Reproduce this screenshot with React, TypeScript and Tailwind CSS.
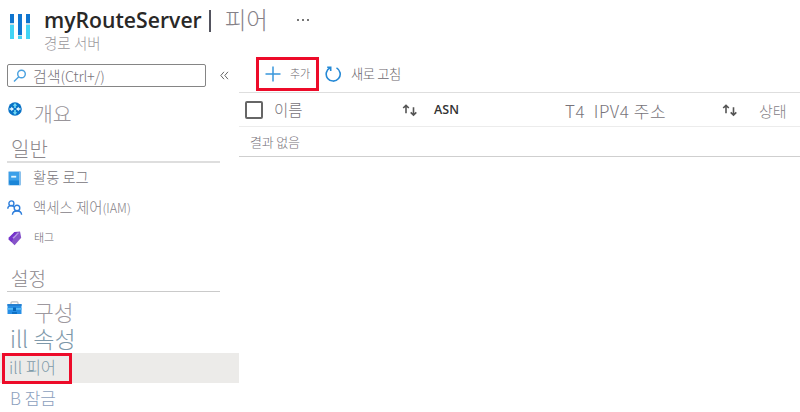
import React from "react";

const KR = "font-['Noto_Sans_CJK_KR',sans-serif] font-light leading-none whitespace-pre";

function Label({ children, className }: { children: React.ReactNode; className: string }) {
  return <span className={`${KR} ${className}`}>{children}</span>;
}

function RouteServerLogo() {
  return (
    <svg width="22" height="26" viewBox="0 0 22 26" className="shrink-0">
      <path d="M1 0h4v9H1zM9 0h4v21H9zM17 0h4v9h-4z" fill="#0f75cf" />
      <path d="M1 9h4v2H1zM17 9h4v2h-4zM9 21h4v1H9z" fill="#c5dde6" />
      <path d="M1 11h4v14H1zM17 11h4v14h-4zM9 22h4v3H9z" fill="#43d4f4" />
    </svg>
  );
}

function SearchIcon() {
  return (
    <svg width="14" height="14" viewBox="0 0 14 14" fill="none" stroke="#48a0df" strokeWidth="1.4" className="shrink-0">
      <circle cx="8.5" cy="5" r="3.8" />
      <path d="M5.8 7.7 1 12.5" />
    </svg>
  );
}

function OverviewIcon() {
  return (
    <svg width="14" height="14" viewBox="0 0 14 14">
      <circle cx="7" cy="7" r="6.8" fill="#0873c7" />
      <path d="M7 1 9.2 3.8H7.8V6H6.2V3.8H4.8zM7 13l2.2-2.8H7.8V8H6.2v2.2H4.8z" fill="#75dcf5" />
      <path d="M1.5 6.2h1.7V4.8L6 7 3.2 9.2V7.8H1.5zM12.5 6.2h-1.7V4.8L8 7l2.8 2.2V7.8h1.7z" fill="#e7f8fd" />
    </svg>
  );
}

function LogIcon() {
  return (
    <svg width="14" height="15" viewBox="0 0 14 15">
      <rect x="0.2" y="0.2" width="12.8" height="14.3" rx="1" fill="#8bc1ec" />
      <path d="M1 1H11v11.7H1z" fill="#3b9fe9" />
      <path d="M1 9.5h10V14H1.5z" fill="#1b86d8" />
      <rect x="3.2" y="4.8" width="5" height="1.8" fill="#e3f6ff" />
    </svg>
  );
}

function PeopleIcon() {
  return (
    <svg width="16" height="16" viewBox="0 0 16 16" fill="none" stroke="#2f7fdc" strokeWidth="1.4">
      <circle cx="4.4" cy="3.4" r="2.5" />
      <path d="M.8 8.8C.8 4.9 5.6 4.9 7 7" />
      <circle cx="10" cy="8" r="2.8" />
      <path d="M5.4 14.8C5.7 9.7 14.3 9.7 14.6 14.8" />
    </svg>
  );
}

function TagIcon() {
  return (
    <svg width="14" height="15" viewBox="0 0 14 15">
      <path d="M6.5 1 12 .5l1.2 6.3L6.6 14.2.5 8.2z" fill="#8653c9" />
      <path d="M6.5 1 .8 6.6l-.3 1.6L3.6 11 9 1z" fill="#7432cb" />
      <path d="m4.4 6.8 5.4-5.1 1.4.1-5.5 6z" fill="#b79ae4" />
    </svg>
  );
}

function ToolboxIcon() {
  return (
    <svg width="15" height="14" viewBox="0 0 15 14">
      <path d="M4 3.5V1.9c0-.7.4-1 1-1h5c.6 0 1 .3 1 1v1.6" fill="none" stroke="#b9bec2" strokeWidth="1.2" />
      <path d="M.5 3h14v10H.5z" fill="#278fe6" />
      <path d="M.5 3h14v2H.5z" fill="#2480d0" />
      <path d="M.5 7h14v1.8H.5z" fill="#53b9f5" />
      <path d="M6 6.5h3V10H6zM5 11.2h5v1.5H5z" fill="#0968b9" />
    </svg>
  );
}

function SortIcon() {
  return (
    <svg width="16" height="13" viewBox="0 0 16 13" fill="none" stroke="#555" strokeWidth="1.6" className="mt-[2px] shrink-0">
      <path d="M4 9.2V1.5M1.2 4 4 1.3 6.8 4M11.5 3.3v7.8M8.7 8.4l2.8 2.7 2.8-2.7" />
    </svg>
  );
}

function Sidebar() {
  return (
    <aside className="flex w-[239px] shrink-0 flex-col">
      <div className="flex h-[39px] items-start pl-[7px] pt-[7px]">
        <div className="flex h-[23px] w-[199px] items-center rounded-[2px] border border-[#858585] pl-[5px]">
          <SearchIcon />
          <Label className="ml-[6px] text-[15px] text-[#77737a]">
            검색<span className="text-[14.5px] tracking-[-0.2px]">(Ctrl+/)</span>
          </Label>
        </div>
        <svg width="9" height="9" viewBox="0 0 9 9" fill="none" stroke="#666" className="ml-[14px] mt-[7px]">
          <path d="M4 .8.8 4.5 4 8.2M8 .8 4.8 4.5 8 8.2" />
        </svg>
      </div>
      <div className="flex h-[33px] items-start pl-2 pt-[6px]">
        <OverviewIcon />
        <Label className="ml-[12px] mt-px text-[20.5px] text-[#99959a]">개요</Label>
      </div>
      <div className="ml-[7px] h-[34px] w-[213px] border-b-2 border-[#dedede] pl-1 pt-[10px]">
        <Label className="block text-[20px] text-[#8b878c]">일반</Label>
      </div>
      <div className="flex h-[30px] items-center pl-2">
        <LogIcon />
        <Label className="mb-[2px] ml-[11px] text-[14.3px] text-[#77737a]">활동 로그</Label>
      </div>
      <div className="flex h-[30px] items-center pl-[7px]">
        <PeopleIcon />
        <Label className="mb-px ml-[10px] text-[14.4px] text-[#858188]">
          액세스 제어<span className="text-[12.5px]">(IAM)</span>
        </Label>
      </div>
      <div className="flex h-[30px] items-center pl-2">
        <TagIcon />
        <Label className="mb-px ml-[12px] text-[11px] text-[#6a666c]">태그</Label>
      </div>
      <div className="ml-[7px] h-[39px] w-[213px] border-b border-[#cacaca] pl-1 pt-[15px]">
        <Label className="block text-[19px] text-[#8b878c]">설정</Label>
      </div>
      <div className="flex h-[37px] items-start pl-[7px] pt-[9px]">
        <ToolboxIcon />
        <Label className="ml-[12px] text-[21.5px] text-[#9d989e]">구성</Label>
      </div>
      <div className="h-[24px] pl-[10px]">
        <Label className="-mt-[2px] block text-[23px] text-[#7d98aa]">ill 속성</Label>
      </div>
      <div className="flex h-[30px] bg-[#ecebe9] pl-[2px]">
        <div className="flex h-[31px] w-[70px] items-center border-[3px] border-[#ed0b29] pl-[4px]">
          <Label className="mb-[2px] text-[16.5px] text-[#7f9baa]">ill 피어</Label>
        </div>
      </div>
      <div className="flex h-[29px] items-center pl-[10px]">
        <Label className="mb-px text-[17px] text-[#8ca0bd]">B 잠금</Label>
      </div>
    </aside>
  );
}

function PeerTable() {
  return (
    <main className="w-[561px]">
      <div className="flex h-[36px] border-b border-[#dedede]">
        <div className="ml-[17px] flex h-[34px] w-[63px] items-center border-[3px] border-[#ed0b29] pl-[6px]">
          <svg width="16" height="16" viewBox="0 0 16 16" fill="none" stroke="#3997dc" strokeWidth="1.5" className="shrink-0">
            <path d="M8 .5v15M.5 8h15" />
          </svg>
          <Label className="mb-px ml-[9px] text-[11px] text-[#6a666c]">추가</Label>
        </div>
        <svg width="17" height="17" viewBox="0 0 17 17" fill="none" stroke="#2589d6" strokeWidth="1.6" className="ml-[6px] mt-[9px]">
          <path d="M11.5 1.9A7 7 0 1 1 5.1 1.8" />
          <path d="M2.2 1.3h3.5v3.6" />
        </svg>
        <Label className="ml-[9px] mt-[10px] text-[13.3px] tracking-[-0.4px] text-[#6a666c]">새로 고침</Label>
      </div>
      <div className="flex h-[34px] items-center border-b border-[#ececec]">
        <span className="ml-[6px] size-[18px] shrink-0 rounded-[2px] border-2 border-[#666]" />
        <Label className="ml-[11px] w-[128px] text-[15.5px] text-[#77737a]">이름</Label>
        <SortIcon />
        <span className="ml-[16px] mt-[2px] w-[131px] font-['Open_Sans',sans-serif] text-[12.5px] font-semibold leading-none text-[#333]">ASN</span>
        <Label className="mt-px w-[157px] text-[17px] tracking-[0.55px] text-[#77737a]">T4  IPV4 주소</Label>
        <SortIcon />
        <Label className="ml-[21px] mt-px text-[15px] text-[#858188]">상태</Label>
      </div>
      <div className="flex h-[30px] items-center border-b border-[#cfcfcf] pl-[11px]">
        <Label className="mb-px text-[13px] tracking-[-0.2px] text-[#77737a]">결과 없음</Label>
      </div>
    </main>
  );
}

export default function App() {
  return (
    <div className="h-[412px] w-[800px] overflow-hidden bg-white">
      <header className="flex h-[57px] pl-[9px]">
        <div className="pt-[14px]"><RouteServerLogo /></div>
        <div className="ml-[12px]">
          <div className="flex h-[36px] items-center pt-[3px]">
            <span className="ml-px whitespace-pre font-['Open_Sans',sans-serif] text-[21.2px] font-semibold leading-none text-[#292827]">myRouteServer</span>
            <span className="ml-[7px] mt-[3px] h-[22px] w-[2px] bg-[#53545f]" />
            <Label className="ml-[14px] text-[23.5px] text-[#858188]">피어</Label>
            <span className="ml-[29px] flex gap-[3px]">
              <i className="size-[2px] bg-[#777]" /><i className="size-[2px] bg-[#777]" /><i className="size-[2px] bg-[#777]" />
            </span>
          </div>
          <div className="pl-px">
            <Label className="block text-[14.5px] text-[#99969b]">경로 서버</Label>
          </div>
        </div>
      </header>
      <div className="flex">
        <Sidebar />
        <PeerTable />
      </div>
    </div>
  );
}
